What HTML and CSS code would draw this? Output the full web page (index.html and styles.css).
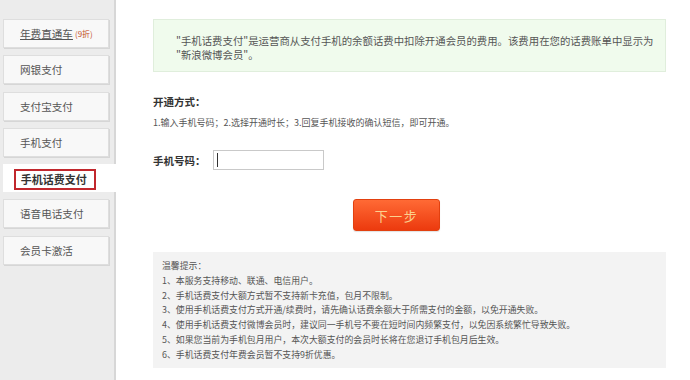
FILE: index.html
```html
<!DOCTYPE html>
<html lang="zh-CN">
<head>
<meta charset="utf-8">
<title>手机话费支付</title>
<link rel="stylesheet" href="styles.css">
</head>
<body>
<div class="page">
  <aside class="sidebar">
    <a class="nav-item"><span class="nav-underline">年费直通车</span><span class="discount">(9折)</span></a>
    <a class="nav-item">网银支付</a>
    <a class="nav-item">支付宝支付</a>
    <a class="nav-item">手机支付</a>
    <div class="nav-item active"><span class="active-label">手机话费支付</span></div>
    <a class="nav-item">语音电话支付</a>
    <a class="nav-item">会员卡激活</a>
  </aside>
  <main class="content">
    <div class="intro">"手机话费支付"是运营商从支付手机的余额话费中扣除开通会员的费用。该费用在您的话费账单中显示为<br>"新浪微博会员"。</div>
    <h3 class="section-title">开通方式：</h3>
    <p class="steps">1.输入手机号码；2.选择开通时长；3.回复手机接收的确认短信，即可开通。</p>
    <div class="phone-row">
      <span class="phone-label">手机号码：</span>
      <div class="phone-input"><span class="caret"></span></div>
    </div>
    <div class="actions"><button class="next-btn">下一步</button></div>
    <div class="tips">
      <div class="tips-title">温馨提示：</div>
      <ol class="tips-list">
        <li>1、本服务支持移动、联通、电信用户。</li>
        <li>2、手机话费支付大额方式暂不支持新卡充值，包月不限制。</li>
        <li>3、使用手机话费支付方式开通/续费时，请先确认话费余额大于所需支付的金额，以免开通失败。</li>
        <li>4、使用手机话费支付微博会员时，建议同一手机号不要在短时间内频繁支付，以免因系统繁忙导致失败。</li>
        <li>5、如果您当前为手机包月用户，本次大额支付的会员时长将在您退订手机包月后生效。</li>
        <li>6、手机话费支付年费会员暂不支持9折优惠。</li>
      </ol>
    </div>
  </main>
</div>
</body>
</html>
```
FILE: styles.css
```css
* { box-sizing: border-box; }
html, body {
  margin: 0;
  padding: 0;
  background: #ffffff;
  font-family: "Noto Sans CJK SC", "Noto Sans", "Liberation Sans", sans-serif;
  color: #555;
}
.page {
  display: flex;
  width: 690px;
  height: 380px;
  overflow: hidden;
}
.sidebar {
  width: 116px;
  flex: none;
  height: 380px;
  background: #ececec;
  border-right: 2px solid #d7d7d7;
  padding: 19px 0 0 3px;
  display: flex;
  flex-direction: column;
  gap: 7.3px;
}
.nav-item {
  display: flex;
  align-items: center;
  width: 106px;
  height: 29px;
  padding-left: 16px;
  background: #f8f8f8;
  border: 1px solid #dedede;
  box-shadow: 1px 1px 0 #d6d6d6;
  font-size: 10.6px;
  color: #555;
  text-decoration: none;
  white-space: nowrap;
}
.nav-underline {
  text-decoration: underline;
  color: #555;
}
.discount {
  font-size: 8px;
  color: #c4532e;
  margin-left: 2px;
}
.nav-item.active {
  width: 113px;
  height: 28px;
  background: #ffffff;
  border: none;
  box-shadow: none;
  padding: 0 0 2px 11px;
  align-items: flex-end;
}
.active-label {
  display: block;
  height: 21px;
  line-height: 17px;
  border: 2px solid #c1272d;
  padding: 0 7px 0 4.7px;
  font-size: 11px;
  font-weight: bold;
  color: #333;
}
.content {
  flex: 1;
  padding: 19px 24px 0 37px;
}
.intro {
  height: 53px;
  background: #f0fbed;
  border: 1px solid #e0eedc;
  padding: 14px 10px 0 22px;
  font-size: 10.4px;
  line-height: 14px;
  color: #555;
  white-space: nowrap;
}
.section-title {
  margin: 23px 0 0;
  font-size: 10.5px;
  line-height: 14px;
  font-weight: bold;
  color: #333;
}
.steps {
  margin: 7px 0 0;
  font-size: 9px;
  line-height: 14px;
  color: #555;
}
.phone-row {
  display: flex;
  align-items: center;
  margin-top: 20px;
  height: 20px;
}
.phone-label {
  width: 60px;
  font-size: 10.5px;
  font-weight: bold;
  color: #333;
}
.phone-input {
  width: 111px;
  height: 20px;
  border: 1px solid #c9c9c9;
  background: #fff;
  padding: 2px 0 0 3px;
}
.caret {
  display: block;
  width: 1px;
  height: 14px;
  background: #333;
}
.actions {
  margin-top: 29px;
  padding-left: 200px;
}
.next-btn {
  display: block;
  width: 87px;
  height: 32px;
  border: 1px solid #e2400f;
  border-radius: 3px;
  background: linear-gradient(#ff6a35, #ec3a0e);
  color: #fcd08e;
  font-family: "Noto Sans CJK SC", sans-serif;
  font-size: 13px;
  letter-spacing: 1.5px;
  padding: 0;
  box-shadow: 0 1px 1px rgba(0,0,0,0.12);
}
.tips {
  margin-top: 21px;
  height: 116px;
  background: #f3f3f3;
  padding: 7px 0 0 9px;
  font-size: 8.9px;
  line-height: 14.8px;
  color: #555;
}
.tips-list {
  list-style: none;
  margin: 0;
  padding: 0;
}
.tips-list li {
  white-space: nowrap;
}
```
